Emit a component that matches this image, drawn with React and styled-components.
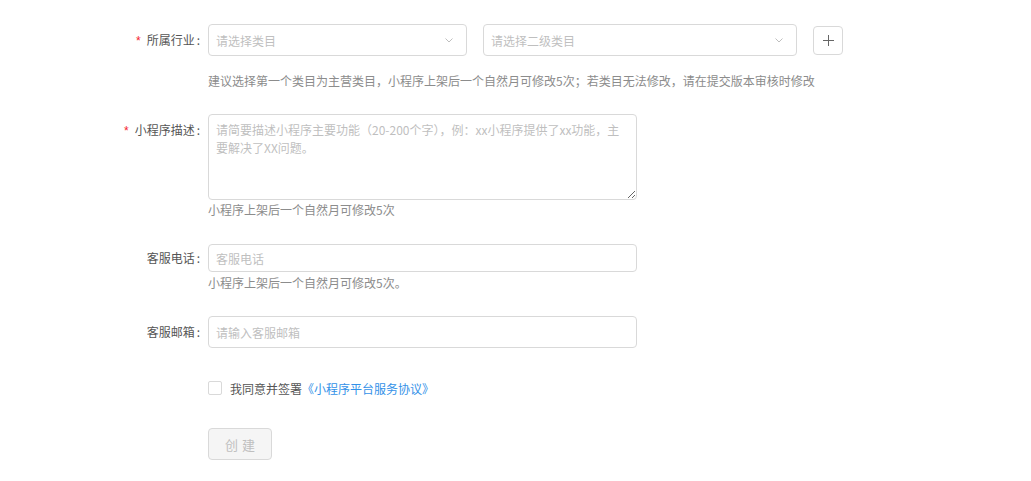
import React from 'react'
import styled, { createGlobalStyle } from 'styled-components'

const GlobalStyle = createGlobalStyle`
  * { box-sizing: border-box; }
  body {
    margin: 0;
    background: #fff;
    font-family: "Noto Sans CJK SC", "Noto Sans", sans-serif;
    font-size: 12px;
    color: #333;
  }
`

const Form = styled.form`
  padding: 24px 0 0 112px;
  width: 1031px;
`

const Item = styled.div`
  display: flex;
  align-items: flex-start;
  margin-bottom: ${p => p.$mb || 0}px;
`

const Label = styled.label`
  width: 96px;
  flex-shrink: 0;
  text-align: right;
  line-height: ${p => p.$h || 32}px;
  color: #555;
  white-space: nowrap;
  &::after {
    content: ${p => (p.$empty ? "''" : "':'")};
    margin: 0 8px 0 2px;
  }
`

const Star = styled.span`
  color: #f5222d;
  margin-right: 6px;
  font-family: "Liberation Sans", sans-serif;
`

const Control = styled.div`
  display: flex;
  flex-direction: column;
`

const Line = styled.div`
  display: flex;
  align-items: center;
  gap: 16px;
`

const Select = styled.div`
  width: ${p => p.$w}px;
  height: 32px;
  border: 1px solid #d9d9d9;
  border-radius: 4px;
  display: flex;
  align-items: center;
  justify-content: space-between;
  padding: 0 13px 0 7px;
  color: #bfbfbf;
`

const AddButton = styled.button`
  width: 30px;
  height: 29px;
  border: 1px solid #d9d9d9;
  border-radius: 4px;
  background: #fff;
  padding: 0;
  display: flex;
  align-items: center;
  justify-content: center;
`

const Extra = styled.div`
  margin-top: ${p => p.$mt}px;
  line-height: 16px;
  color: #8c8c8c;
  white-space: nowrap;
`

const TextArea = styled.textarea`
  width: 429px;
  height: 86px;
  border: 1px solid #d9d9d9;
  border-radius: 4px;
  padding: 6px 7px;
  font: inherit;
  font-size: 12px;
  line-height: 18px;
  color: #333;
  resize: vertical;
  display: block;
  &::placeholder { color: #bfbfbf; }
`

const Input = styled.input`
  width: 429px;
  height: ${p => p.$h || 32}px;
  border: 1px solid #d9d9d9;
  border-radius: 4px;
  padding: 0 7px;
  font: inherit;
  font-size: 12px;
  color: #333;
  display: block;
  &::placeholder { color: #bfbfbf; }
`

const Agree = styled.div`
  display: flex;
  align-items: center;
  height: 16px;
  color: #555;
`

const Box = styled.span`
  width: 14px;
  height: 14px;
  border: 1px solid #d9d9d9;
  border-radius: 2px;
  margin-right: 8px;
  background: #fff;
`

const Link = styled.a`
  color: #3391e8;
  text-decoration: none;
`

const Submit = styled.button`
  width: 64px;
  height: 32px;
  border: 1px solid #d9d9d9;
  border-radius: 4px;
  background: #f5f5f5;
  color: #bfbfbf;
  font: inherit;
  font-size: 13px;
  letter-spacing: 4px;
  padding: 0 0 0 4px;
`

const Chevron = () => (
  <svg width="8" height="5" viewBox="0 0 8 5">
    <path d="M0.5 0.5 L4 4 L7.5 0.5" fill="none" stroke="#bfbfbf" strokeWidth="1" />
  </svg>
)

const Plus = () => (
  <svg width="11" height="11" viewBox="0 0 11 11">
    <path d="M5.5 0 V11 M0 5.5 H11" stroke="#666" strokeWidth="1" />
  </svg>
)

export default function App() {
  return (
    <>
      <GlobalStyle />
      <Form onSubmit={e => e.preventDefault()}>
        <Item $mb={25}>
          <Label><Star>*</Star>所属行业</Label>
          <Control>
            <Line>
              <Select $w={259}>请选择类目<Chevron /></Select>
              <Select $w={314}>请选择二级类目<Chevron /></Select>
              <AddButton type="button"><Plus /></AddButton>
            </Line>
            <Extra $mt={17}>建议选择第一个类目为主营类目，小程序上架后一个自然月可修改5次；若类目无法修改，请在提交版本审核时修改</Extra>
          </Control>
        </Item>

        <Item $mb={26}>
          <Label><Star>*</Star>小程序描述</Label>
          <Control>
            <TextArea placeholder="请简要描述小程序主要功能（20-200个字），例：xx小程序提供了xx功能，主要解决了XX问题。" />
            <Extra $mt={2}>小程序上架后一个自然月可修改5次</Extra>
          </Control>
        </Item>

        <Item $mb={25}>
          <Label $h={28}>客服电话</Label>
          <Control>
            <Input $h={28} placeholder="客服电话" />
            <Extra $mt={3}>小程序上架后一个自然月可修改5次。</Extra>
          </Control>
        </Item>

        <Item $mb={32}>
          <Label>客服邮箱</Label>
          <Control>
            <Input placeholder="请输入客服邮箱" />
          </Control>
        </Item>

        <Item $mb={32}>
          <Label $h={16} $empty />
          <Agree>
            <Box />
            我同意并签署<Link href="#">《小程序平台服务协议》</Link>
          </Agree>
        </Item>

        <Item>
          <Label $empty />
          <Submit type="submit" disabled>创建</Submit>
        </Item>
      </Form>
    </>
  )
}
